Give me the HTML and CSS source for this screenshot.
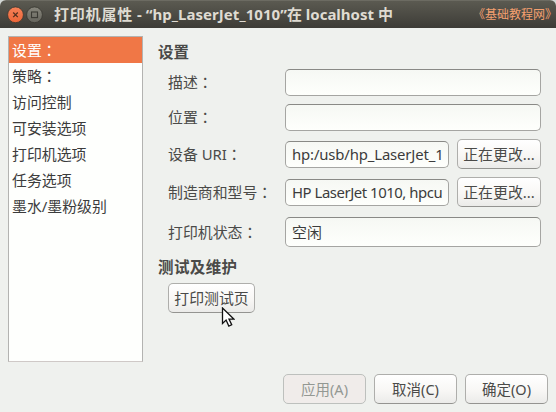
FILE: index.html
```html
<!DOCTYPE html>
<html lang="zh-CN">
<head>
<meta charset="utf-8">
<title>打印机属性</title>
<link rel="stylesheet" href="styles.css">
</head>
<body>
<div class="window">
  <header class="titlebar">
    <svg class="controls" width="36" height="18" viewBox="0 0 36 18">
      <defs>
        <linearGradient id="close" x1="0" y1="0" x2="0" y2="1"><stop offset="0" stop-color="#f58158"/><stop offset="1" stop-color="#ee6638"/></linearGradient>
        <linearGradient id="max" x1="0" y1="0" x2="0" y2="1"><stop offset="0" stop-color="#88877d"/><stop offset="1" stop-color="#65645c"/></linearGradient>
      </defs>
      <circle cx="8.5" cy="8.8" r="7.9" fill="url(#close)" stroke="#373630" stroke-width=".8"/>
      <path d="M6.2 6.5l4.6 4.6M10.8 6.5l-4.6 4.6" stroke="#54301f" stroke-width="1.3"/>
      <circle cx="27.5" cy="8.8" r="7.9" fill="url(#max)" stroke="#373630" stroke-width=".8"/>
      <rect x="24.5" y="6" width="6" height="5.6" fill="none" stroke="#3b3a34" stroke-width="1.1"/>
    </svg>
    <h1 class="title"><span class="title-name">打印机属性</span><span class="title-id"> - “hp_LaserJet_1010”</span><span class="title-host">在 localhost 中</span></h1>
    <span class="brand"><span class="open">《</span>基础教程网<span class="close">》</span></span>
  </header>
  <main class="content">
    <ul class="nav">
      <li class="nav-item selected">设置<span class="colon" lang="zh-TW">：</span></li>
      <li class="nav-item">策略<span class="colon" lang="zh-TW">：</span></li>
      <li class="nav-item">访问控制</li>
      <li class="nav-item">可安装选项</li>
      <li class="nav-item">打印机选项</li>
      <li class="nav-item">任务选项</li>
      <li class="nav-item">墨水/墨粉级别</li>
    </ul>
    <section class="panel">
      <h2 class="heading">设置</h2>
      <div class="form">
        <div class="row short"><span class="label">描述<span class="colon" lang="zh-TW">：</span></span><div class="field"></div></div>
        <div class="row short"><span class="label">位置<span class="colon" lang="zh-TW">：</span></span><div class="field"></div></div>
        <div class="row"><span class="label">设备 <span class="latin">URI</span><span class="colon" lang="zh-TW">：</span></span><div class="field entry"><span class="clip uri">hp:/usb/hp_LaserJet_1</span></div><button class="button change">正在更改...</button></div>
        <div class="row"><span class="label">制造商和型号<span class="colon" lang="zh-TW">：</span></span><div class="field entry"><span class="clip model">HP LaserJet 1010, hpcu</span></div><button class="button change">正在更改...</button></div>
        <div class="row status"><span class="label">打印机状态<span class="colon" lang="zh-TW">：</span></span><div class="field">空闲</div></div>
      </div>
      <h2 class="heading tests">测试及维护</h2>
      <div class="test-action">
        <button class="button test">打印测试页</button>
        <svg class="pointer" width="14" height="21" viewBox="0 0 14 21"><path d="M1.5 1v15.5l3.6-3.4 2.7 6 2.9-1.3-2.7-5.7h4.8z" fill="#fff" stroke="#111" stroke-width="1.3"/></svg>
      </div>
    </section>
  </main>
  <footer class="actions">
    <button class="button" disabled>应用<span class="latin">(A)</span></button>
    <button class="button">取消<span class="latin">(C)</span></button>
    <button class="button">确定<span class="latin">(O)</span></button>
  </footer>
</div>
</body>
</html>
```
FILE: styles.css
```css
* { box-sizing: border-box; }
body {
  margin: 0;
  background: #d3d8d6;
  color: #4a4a48;
  font: 14.9px/20px "Noto Sans", "Noto Sans CJK SC", sans-serif;
}
.window {
  width: 556px;
  height: 412px;
  overflow: hidden;
  background: #eff1ee;
  border-radius: 6px 6px 0 0;
  white-space: nowrap;
}
.titlebar {
  display: flex;
  align-items: center;
  height: 28px;
  padding: 0 5px 0 7px;
  background: linear-gradient(#5b5a51, #3d3c37);
  border-top: 1px solid #6c6b62;
}
.controls { flex: none; }
.title {
  display: flex;
  margin: -2px 0 0 11px;
  color: #dfdbd2;
  font-size: 15px;
  font-weight: 700;
  white-space: pre;
}
.title-name { letter-spacing: 0.8px; }
.title-id { letter-spacing: 0.05px; }
.brand {
  margin-left: auto;
  color: #f5a070;
  font-size: 12px;
}
.open { margin-left: -6px; }
.close { margin-right: -6px; }
.content { display: flex; height: 334px; padding: 8px 15px 0 8px; }
.nav {
  flex: none;
  width: 135px;
  height: 326px;
  margin: 0;
  padding: 0;
  list-style: none;
  background: #fefffd;
  border: 1px solid #b3b3b1;
  border-bottom-color: #cfc9c7;
  color: #3c3c3c;
}
.nav-item { height: 26px; padding-left: 3px; line-height: 26px; }
.selected { background: #f07746; color: #fff; }
.colon { font-family: "Noto Sans CJK TC", sans-serif; line-height: 1; }
.panel { width: 383px; margin-left: 15px; }
.heading { height: 33px; margin: 0; font-size: 15.5px; font-weight: 700; line-height: 33px; }
.form { display: grid; grid-template-rows: 27px 27px 30px 30px 30px; gap: 8px; margin-left: 10px; }
.row { display: grid; grid-template-columns: 117px 164px 84px; column-gap: 0; align-items: center; }
.row .field { grid-column: 2 / 4; margin-right: -8px; }
.row .entry { grid-column: 2; margin-right: 0; height: 27px; line-height: 25px; }
.label { line-height: 27px; }
.change { margin-left: 8px; width: 84px; }
.status { margin: 2px 0 -2px; }
.field {
  height: 100%;
  padding: 0 6px;
  overflow: hidden;
  line-height: 29px;
  color: #3c3c3c;
  background: linear-gradient(#f6f8f4, #fefffc);
  border: 1px solid #a5a5a2;
  border-top-color: #898986;
  border-radius: 5px;
}
.clip { display: block; width: 150px; overflow: hidden; }
.uri { letter-spacing: -0.15px; }
.model { letter-spacing: -0.45px; }
.latin { display: inline-block; }
.button {
  height: 30px;
  padding: 0;
  font: inherit;
  color: #4a4a48;
  background: linear-gradient(#fff, #f8f7f5 55%, #ebebe9);
  border: 1px solid #aeaeab;
  border-bottom-color: #949491;
  border-radius: 5px;
}
.tests { height: 27px; margin-top: 9px; line-height: 27px; letter-spacing: 0.4px; }
.test-action { position: relative; width: 87px; margin: 2px 0 0 10px; }
.test { display: block; width: 87px; }
.pointer { position: absolute; left: 53px; top: 24px; }
.actions { display: flex; justify-content: flex-end; gap: 8px; padding: 12px 8px 0 0; }
.actions .button { width: 83px; font-size: 14.5px; }
.button:disabled { color: #939893; background: #f0ecea; border-color: #bdc0bd; }
```
